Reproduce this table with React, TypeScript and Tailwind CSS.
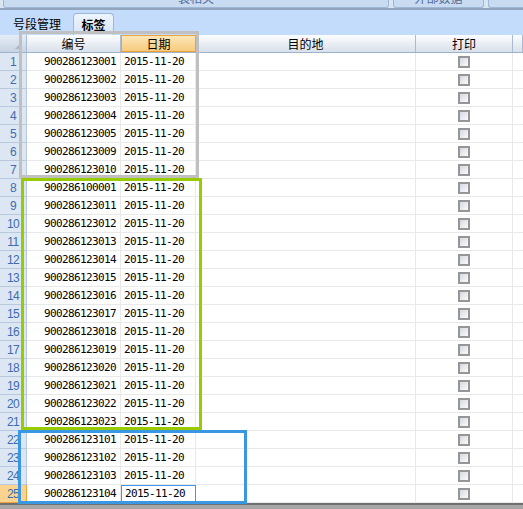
import React from "react"

const ROWS = [
  "900286123001", "900286123002", "900286123003", "900286123004", "900286123005",
  "900286123009", "900286123010", "900286100001", "900286123011", "900286123012",
  "900286123013", "900286123014", "900286123015", "900286123016", "900286123017",
  "900286123018", "900286123019", "900286123020", "900286123021", "900286123022",
  "900286123023", "900286123101", "900286123102", "900286123103", "900286123104",
]

const CJK = "font-['Noto_Sans_CJK_SC','Noto_Sans',sans-serif]"
const MONO = "font-['DejaVu_Sans_Mono',monospace] text-[11px] tracking-[-0.62px]"

function Checkbox() {
  return (
    <div className="h-[12px] w-[12px] border-2 border-[#969696] bg-gradient-to-br from-[#d4d9e2] to-[#fbfbfd]" />
  )
}

function TopButtons() {
  return (
    <div className="flex h-[10px] gap-[4px] border-b-2 border-[#93a5bd] bg-[#d9e5f3] pl-[3px]">
      <div className="flex h-[8px] w-[386px] justify-center overflow-hidden rounded-b-[3px] border border-t-0 border-[#9fb7d6] bg-[#c9dbf1]">
        <span className={`${CJK} mt-[-9px] text-[12px] leading-[14px] text-[#4d6d9c]`}>装相关</span>
      </div>
      <div className="flex h-[8px] w-[91px] justify-center overflow-hidden rounded-b-[3px] border border-t-0 border-[#9fb7d6] bg-[#c9dbf1]">
        <span className={`${CJK} mt-[-9px] text-[12px] leading-[14px] text-[#4d6d9c]`}>外部数据</span>
      </div>
      <div className="h-[8px] flex-1 rounded-bl-[3px] border border-t-0 border-r-0 border-[#9fb7d6] bg-[#c9dbf1]" />
    </div>
  )
}

function Tabs() {
  return (
    <div className={`${CJK} flex h-[25px] items-end bg-[#c3dcfb] text-[12px] text-black`}>
      <div className="flex h-[22px] items-center pl-[13px]">号段管理</div>
      <div className="ml-[12px] flex h-[22px] w-[41px] items-center justify-center rounded-t-[4px] border border-b-0 border-[#9fb6d4] bg-gradient-to-b from-[#eef4fc] to-[#d8e6f8] font-bold">
        标签
      </div>
    </div>
  )
}

function Header() {
  const cell = "flex items-center justify-center border-r border-[#a8bbd2] bg-gradient-to-b from-[#fcfdfe] to-[#d9e0ea]"
  return (
    <div className={`${CJK} flex h-[18px] border-b border-[#9cb3cb] text-[12px] text-black`}>
      <div className="relative w-[27px] border-r border-[#a8bbd2] bg-gradient-to-b from-[#e6edf6] to-[#c7d3e3]">
        <svg className="absolute bottom-[3px] right-[4px]" width="7" height="7" viewBox="0 0 7 7">
          <path d="M7 0 L7 7 L0 7 Z" fill="#aab6c6" />
        </svg>
      </div>
      <div className={`${cell} w-[94px]`}>编号</div>
      <div className="flex w-[75px] items-center justify-center border border-[#f0a23a] bg-gradient-to-b from-[#fce6b8] to-[#f7cb7c]">日期</div>
      <div className={`${cell} w-[220px]`}>目的地</div>
      <div className={`${cell} w-[97px]`}>打印</div>
      <div className={`${cell} flex-1`} />
    </div>
  )
}

function Row({ n, code }: { n: number; code: string }) {
  const last = n === ROWS.length
  return (
    <div className="flex h-[18px]">
      <div
        className={`flex w-[27px] items-center justify-center border-r border-b pt-[1px] font-['Liberation_Sans',sans-serif] text-[12px] tracking-[-0.6px] text-[#3d6cb0] ${
          last ? "border-[#f0a23a] bg-[#fcd38e]" : "border-[#b9c9dd] bg-[#dde7f3]"
        }`}
      >
        {n}
      </div>
      <div className={`${MONO} flex w-[94px] items-center justify-end border-r border-b border-[#e9e9e9] pt-[1px] pr-[4px] text-black`}>
        {code}
      </div>
      <div
        className={`${MONO} flex w-[75px] items-center pt-[1px] pl-[3px] text-black ${
          last ? "border border-[#3d95f0]" : "border-r border-b border-[#e9e9e9]"
        }`}
      >
        2015-11-20
      </div>
      <div className="w-[220px] border-r border-b border-[#e9e9e9]" />
      <div className="flex w-[97px] items-center justify-center border-r border-b border-[#e9e9e9]">
        <Checkbox />
      </div>
      <div className="flex-1 border-b border-[#e9e9e9]" />
    </div>
  )
}

export default function App() {
  return (
    <div className="relative h-[509px] w-[523px] overflow-hidden bg-white">
      <TopButtons />
      <Tabs />
      <Header />
      <div className="flex flex-col">
        {ROWS.map((code, i) => (
          <Row key={i} n={i + 1} code={code} />
        ))}
      </div>
      <div className="h-[6px] border-t-2 border-[#6f6f6f] bg-[#a7a7a7]" />

      {/* annotation boxes drawn over the grid */}
      <div className="absolute left-[19px] top-[31px] h-[147px] w-[180px] border-[3px] border-[#c0c0c0]" />
      <div className="absolute left-[21px] top-[178px] h-[252px] w-[181px] border-[3px] border-[#99cc00]" />
      <div className="absolute left-[18px] top-[430px] h-[74px] w-[229px] border-[3px] border-[#3a97e4]" />
    </div>
  )
}
